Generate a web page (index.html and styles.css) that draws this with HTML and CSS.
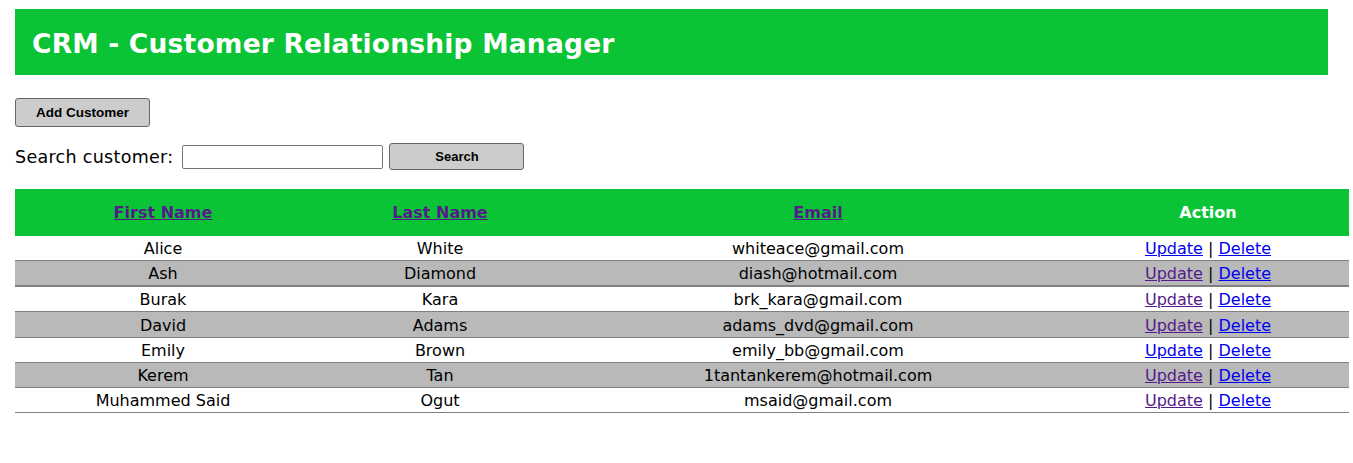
FILE: index.html
```html
<!DOCTYPE html>
<html>
<head>
<meta charset="utf-8">
<link rel="stylesheet" href="styles.css">
</head>
<body>
<div class="wrapper">
  <div class="header"><h2>CRM - Customer Relationship Manager</h2></div>
</div>
<div class="container">
  <button class="btn add-btn">Add Customer</button>
  <form class="search-form">
    <label>Search customer:</label>
    <input type="text" class="search-input">
    <button type="button" class="btn search-btn">Search</button>
  </form>
  <table class="customers">
    <thead>
      <tr>
        <th class="c1"><a href="#" class="visited">First Name</a></th>
        <th class="c2"><a href="#" class="visited">Last Name</a></th>
        <th class="c3"><a href="#" class="visited">Email</a></th>
        <th class="c4">Action</th>
      </tr>
    </thead>
    <tbody>
      <tr><td>Alice</td><td>White</td><td>whiteace@gmail.com</td><td><a href="#">Update</a> | <a href="#">Delete</a></td></tr>
      <tr class="alt thick"><td>Ash</td><td>Diamond</td><td>diash@hotmail.com</td><td><a href="#" class="visited">Update</a> | <a href="#">Delete</a></td></tr>
      <tr><td>Burak</td><td>Kara</td><td>brk_kara@gmail.com</td><td><a href="#" class="visited">Update</a> | <a href="#">Delete</a></td></tr>
      <tr class="alt tall"><td>David</td><td>Adams</td><td>adams_dvd@gmail.com</td><td><a href="#" class="visited">Update</a> | <a href="#">Delete</a></td></tr>
      <tr><td>Emily</td><td>Brown</td><td>emily_bb@gmail.com</td><td><a href="#">Update</a> | <a href="#">Delete</a></td></tr>
      <tr class="alt"><td>Kerem</td><td>Tan</td><td>1tantankerem@hotmail.com</td><td><a href="#" class="visited">Update</a> | <a href="#">Delete</a></td></tr>
      <tr><td>Muhammed Said</td><td>Ogut</td><td>msaid@gmail.com</td><td><a href="#" class="visited">Update</a> | <a href="#">Delete</a></td></tr>
    </tbody>
  </table>
</div>
</body>
</html>
```
FILE: styles.css
```css
html, body {
  margin: 0;
  padding: 0;
  background: #fff;
  font-family: "DejaVu Sans", Verdana, sans-serif;
}
body {
  padding: 9px 4px 0 15px;
}
.wrapper {
  width: 1313px;
}
.header {
  background: #0ac435;
  height: 66px;
  display: flex;
  align-items: center;
  padding-left: 17px;
}
.header h2 {
  margin: 0;
  padding-top: 2px;
  color: #fff;
  font-size: 26.5px;
  font-weight: bold;
  letter-spacing: 0.2px;
}
.container {
  padding-top: 23px;
}
.btn {
  font-family: "Liberation Sans", Arial, sans-serif;
  font-weight: bold;
  font-size: 13px;
  color: #000;
  background: #cccccc;
  border: 1px solid #666;
  border-radius: 3px;
  width: 135px;
  cursor: pointer;
}
.add-btn {
  display: block;
  height: 29px;
  font-size: 13.5px;
}
.search-form {
  display: flex;
  align-items: center;
  margin: 16px 0 0 0;
  font-size: 16px;
  color: #000;
}
.search-form label {
  margin-right: 9px;
  font-size: 17.5px;
  letter-spacing: 0.3px;
}
.search-input {
  width: 197px;
  height: 20px;
  padding: 1px;
  border: 1px solid #767676;
  border-radius: 2px;
  margin: 0 6px 0 0;
}
.search-btn {
  height: 27px;
}
.customers {
  margin-top: 19px;
  width: 1334px;
  border-collapse: collapse;
  font-size: 16px;
  table-layout: fixed;
}
.customers th {
  background: #0ac435;
  color: #fff;
  height: 47px;
  font-weight: bold;
  font-size: 16px;
  padding: 0;
  vertical-align: middle;
}
.customers th.c1 { width: 296px; }
.customers th.c2 { width: 258px; }
.customers th.c3 { width: 498px; }
.customers th.c4 { width: 282px; }
.customers td {
  text-align: center;
  height: 23px;
  padding: 1px 0 0 0;
  border-bottom: 1px solid #808080;
  color: #000;
  line-height: 23px;
}
.customers tr.alt td {
  background: #b9b9b9;
}
.customers tr.thick td {
  border-bottom: 2px solid #808080;
}
.customers tr.tall td {
  height: 24px;
}
a {
  color: #0000ee;
}
a.visited {
  color: #551a8b;
}
```
